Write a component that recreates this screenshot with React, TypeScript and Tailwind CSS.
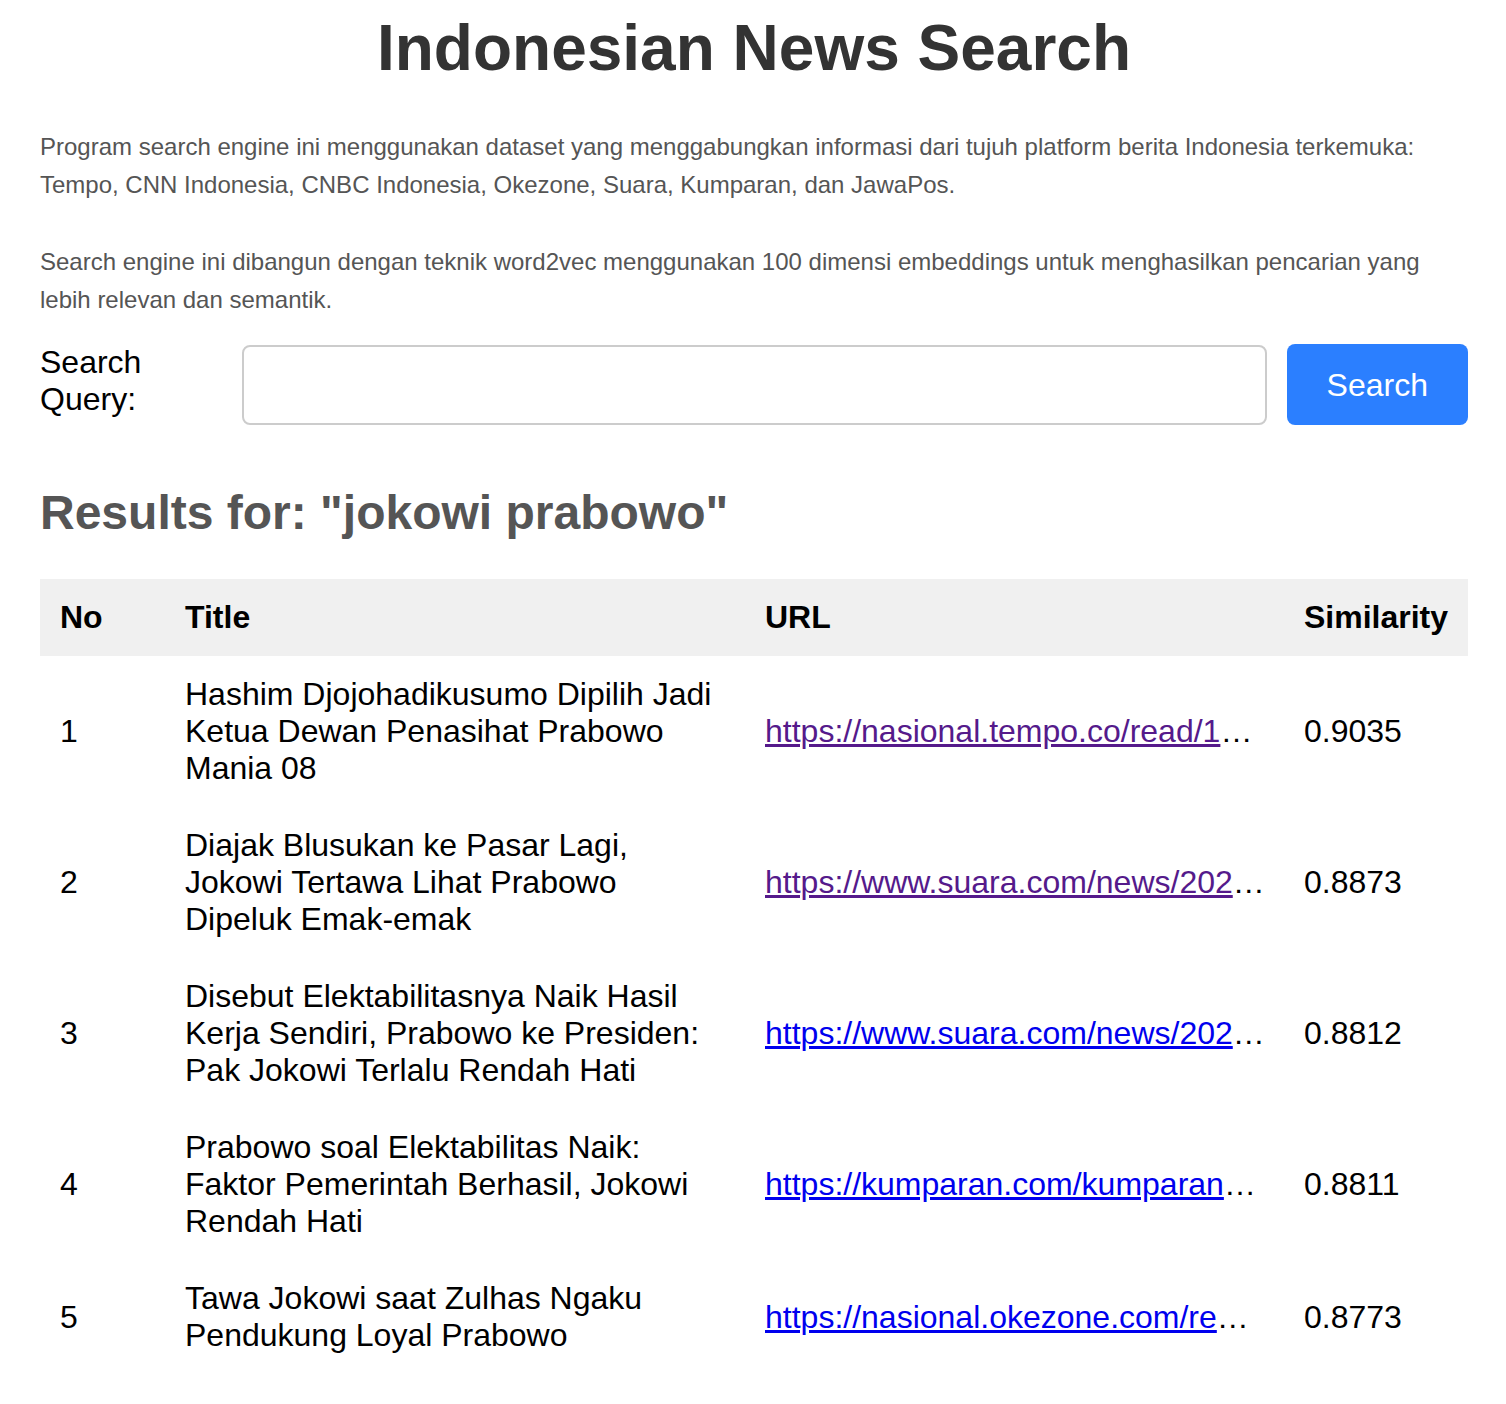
import * as React from "react";

// url is what fits in the column, href is the full link
const results = [
  {
    title: "Hashim Djojohadikusumo Dipilih Jadi Ketua Dewan Penasihat Prabowo Mania 08",
    url: "https://nasional.tempo.co/read/1",
    href: "https://nasional.tempo.co/read/1798312/hashim-djojohadikusumo-dipilih-jadi-ketua-dewan-penasihat-prabowo-mania-08",
    score: "0.9035",
    visited: true,
  },
  {
    title: "Diajak Blusukan ke Pasar Lagi, Jokowi Tertawa Lihat Prabowo Dipeluk Emak-emak",
    url: "https://www.suara.com/news/202",
    href: "https://www.suara.com/news/2023/12/05/diajak-blusukan-ke-pasar-lagi-jokowi-tertawa-lihat-prabowo-dipeluk-emak-emak",
    score: "0.8873",
    visited: true,
  },
  {
    title: "Disebut Elektabilitasnya Naik Hasil Kerja Sendiri, Prabowo ke Presiden: Pak Jokowi Terlalu Rendah Hati",
    url: "https://www.suara.com/news/202",
    href: "https://www.suara.com/news/2023/11/20/disebut-elektabilitasnya-naik-hasil-kerja-sendiri-prabowo-ke-presiden",
    score: "0.8812",
    visited: false,
  },
  {
    title: "Prabowo soal Elektabilitas Naik: Faktor Pemerintah Berhasil, Jokowi Rendah Hati",
    url: "https://kumparan.com/kumparan",
    href: "https://kumparan.com/kumparannews/prabowo-soal-elektabilitas-naik-faktor-pemerintah-berhasil-jokowi-rendah-hati",
    score: "0.8811",
    visited: false,
  },
  {
    title: "Tawa Jokowi saat Zulhas Ngaku Pendukung Loyal Prabowo",
    url: "https://nasional.okezone.com/re",
    href: "https://nasional.okezone.com/read/2023/08/14/337/2864521/tawa-jokowi-saat-zulhas-ngaku-pendukung-loyal-prabowo",
    score: "0.8773",
    visited: false,
  },
];

export default function App() {
  const [query, setQuery] = React.useState("");

  return (
    <div className="min-h-[1404px] bg-white pl-[40px] pr-[38px] pt-[16px] font-['Liberation_Sans',Arial,sans-serif] text-black">
      <h1 className="text-center text-[64px] font-bold leading-none text-[#333]">
        Indonesian News Search
      </h1>

      <p className="mt-[48px] text-[24px] leading-[38px] text-[#555]">
        Program search engine ini menggunakan dataset yang menggabungkan informasi dari tujuh platform berita
        Indonesia terkemuka: Tempo, CNN Indonesia, CNBC Indonesia, Okezone, Suara, Kumparan, dan JawaPos.
      </p>
      <p className="mt-[39px] text-[24px] leading-[38px] text-[#555]">
        Search engine ini dibangun dengan teknik word2vec menggunakan 100 dimensi embeddings untuk menghasilkan
        pencarian yang lebih relevan dan semantik.
      </p>

      <div className="mt-[25px] flex items-center gap-[20px]">
        <label className="w-[182px] shrink-0 self-start text-[32px] leading-[37px]">Search Query:</label>
        <input
          value={query}
          onChange={(e) => setQuery(e.target.value)}
          className="h-[80px] flex-1 rounded-[8px] border-2 border-[#ccc] px-[16px] text-[32px] outline-none"
        />
        <button className="h-[81px] rounded-[8px] bg-blue-500 px-[40px] text-[32px] text-white">Search</button>
      </div>

      <h2 className="mt-[60px] text-[48px] font-bold leading-[55px] text-[#555]">
        Results for: "jokowi prabowo"
      </h2>

      <table className="mt-[39px] w-[1428px] table-fixed border-collapse text-[32px] leading-[37px]">
        <colgroup>
          <col className="w-[125px]" />
          <col className="w-[580px]" />
          <col className="w-[539px]" />
          <col className="w-[184px]" />
        </colgroup>
        <thead>
          <tr className="bg-[#f0f0f0] text-left">
            <th className="p-[20px] font-bold">No</th>
            <th className="p-[20px] font-bold">Title</th>
            <th className="p-[20px] font-bold">URL</th>
            <th className="p-[20px] font-bold">Similarity</th>
          </tr>
        </thead>
        <tbody>
          {results.map((r, i) => (
            <tr key={i}>
              <td className="p-[20px] align-middle">{i + 1}</td>
              <td className="p-[20px] align-middle">{r.title}</td>
              <td className="whitespace-nowrap p-[20px] align-middle">
                <a
                  href={r.href}
                  title={r.href}
                  className={r.visited ? "text-[#551a8b] underline" : "text-[#0000ee] underline"}
                >
                  {r.url}
                </a>
                <span>…</span>
              </td>
              <td className="p-[20px] align-middle">{r.score}</td>
            </tr>
          ))}
        </tbody>
      </table>
    </div>
  );
}
